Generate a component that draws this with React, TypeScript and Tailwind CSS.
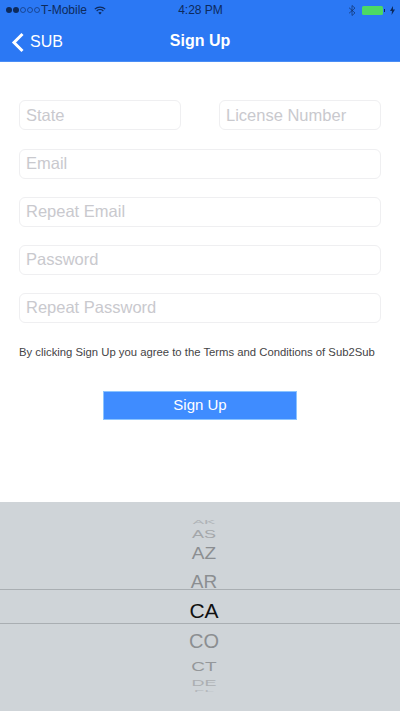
const fields = ['Email', 'Repeat Email', 'Password', 'Repeat Password']

const inputClass =
  'h-[30px] rounded-[6px] border border-[#efeff1] bg-white px-[6px] text-[16.5px] text-[#333] outline-none placeholder:text-[#c9c9ce] min-w-0'

const topRows = [
  { label: 'AK', h: 'h-[10px]', cls: 'text-[17px] scale-y-[0.3] text-[#aeb2b6]' },
  { label: 'AS', h: 'h-[14px]', cls: 'text-[18px] scale-y-[0.6] text-[#a4a7aa]' },
  { label: 'AZ', h: 'h-[24px]', cls: 'text-[19px] scale-y-[0.85] text-[#8b8e91]' },
  { label: 'AR', h: 'h-[24px] pt-[8px]', cls: 'text-[19px] text-[#8b8e91]' },
]

const bottomRows = [
  { label: 'CO', h: 'h-[32px] pt-[2px]', cls: 'text-[20px] text-[#8b8e91]' },
  { label: 'CT', h: 'h-[20px]', cls: 'text-[19px] scale-y-[0.72] text-[#94979a]' },
  { label: 'DE', h: 'h-[14px]', cls: 'text-[18px] scale-y-[0.5] text-[#acafb2]' },
  { label: 'FL', h: 'h-[2px]', cls: 'text-[17px] scale-y-[0.15] text-[#b4b8bc]' },
]

function StatusBar() {
  return (
    <div className="flex h-[20px] items-center justify-between pl-[6px] pr-[5px] text-[12px] text-[#0d2a5c]">
      <div className="flex w-[150px] items-center">
        <div className="flex items-center gap-[1px]">
          <span className="h-[6px] w-[6px] rounded-full bg-[#0d2a5c]" />
          <span className="h-[6px] w-[6px] rounded-full bg-[#0d2a5c]" />
          <span className="h-[6px] w-[6px] rounded-full border border-[#0d2a5c]/60" />
          <span className="h-[6px] w-[6px] rounded-full border border-[#0d2a5c]/60" />
          <span className="h-[6px] w-[6px] rounded-full border border-[#0d2a5c]/60" />
        </div>
        <span className="ml-[1px]">T-Mobile</span>
        <svg className="ml-[7px]" width="12" height="9" viewBox="0 0 15 11" fill="none" stroke="#0d2a5c" strokeWidth="1.6">
          <path d="M1 3.8C4.6 .6 10.4 .6 14 3.8" />
          <path d="M3.3 6C5.6 4 9.4 4 11.7 6" />
          <path d="M7.5 10.5 5.4 8.2C6.6 7.2 8.4 7.2 9.6 8.2Z" fill="#0d2a5c" stroke="none" />
        </svg>
      </div>
      <span className="font-medium">4:28 PM</span>
      <div className="flex w-[150px] items-center justify-end">
        <svg width="8" height="13" viewBox="0 0 8 12" fill="none" stroke="#0d2a5c" strokeOpacity="0.7" strokeWidth="0.9">
          <path d="M1 3.2 7 8.4 4 11V1L7 3.6 1 8.8" />
        </svg>
        <div className="ml-[6px] flex h-[9px] w-[21px] items-center rounded-[1.5px] bg-[#4cd964]" />
        <span className="ml-[1px] h-[3px] w-[1px] bg-[#0d2a5c]" />
        <svg className="ml-[5px]" width="5" height="9" viewBox="0 0 5 9">
          <path d="M3 0 0 5H2L1.6 9 5 3.6H3Z" fill="#0d2a5c" />
        </svg>
      </div>
    </div>
  )
}

function NavBar() {
  return (
    <div className="relative flex h-[41px] items-center justify-center">
      <div className="absolute left-[11px] top-[10px] flex items-center">
        <svg width="14" height="21" viewBox="0 0 14 21" fill="none" stroke="white" strokeWidth="3">
          <path d="M11.5 2 3 10.5l8.5 8.5" />
        </svg>
        <span className="ml-[5px] text-[16px] text-white">SUB</span>
      </div>
      <span className="text-[16px] font-bold text-white">Sign Up</span>
    </div>
  )
}

function Picker() {
  return (
    <div className="flex h-[209px] flex-col items-center overflow-hidden bg-[#cfd4d8] pt-[15px]">
      {topRows.map((r) => (
        <div key={r.label} className={`flex w-full shrink-0 items-center justify-center pl-[8px] ${r.h}`}>
          <span className={`block leading-none ${r.cls}`}>{r.label}</span>
        </div>
      ))}
      <div className="flex h-[35px] w-full shrink-0 items-center justify-center border-y border-[#a9aeb2] pl-[8px] pt-[8px] text-[21px] leading-none text-[#111]">
        CA
      </div>
      {bottomRows.map((r) => (
        <div key={r.label} className={`flex w-full shrink-0 items-center justify-center pl-[8px] ${r.h}`}>
          <span className={`block leading-none ${r.cls}`}>{r.label}</span>
        </div>
      ))}
    </div>
  )
}

export default function App() {
  return (
    <div className="flex h-[711px] w-[400px] flex-col overflow-hidden bg-white font-['Liberation_Sans',Arial,sans-serif]">
      <div className="h-[62px] border-b border-[#4a8df5] bg-[#2b78f4]">
        <StatusBar />
        <NavBar />
      </div>

      <div className="flex h-[440px] flex-col px-[19px] pt-[38px]">
        <div className="flex justify-between">
          <input className={`${inputClass} w-[162px]`} placeholder="State" />
          <input className={`${inputClass} w-[162px]`} placeholder="License Number" />
        </div>
        <div className="mt-[18.5px] flex flex-col gap-[18px]">
          {fields.map((f) => (
            <input key={f} className={`${inputClass} w-full`} placeholder={f} />
          ))}
        </div>
        <p className="mt-[22px] text-[11.3px] leading-[14px] whitespace-nowrap text-[#444446]">
          By clicking Sign Up you agree to the Terms and Conditions of Sub2Sub
        </p>
        <button className="mx-auto mt-[32px] h-[29px] w-[194px] border border-[#8cc4ff] bg-[#3f8cff] pt-[1px] text-[15px] text-white">
          Sign Up
        </button>
      </div>

      <Picker />
    </div>
  )
}
